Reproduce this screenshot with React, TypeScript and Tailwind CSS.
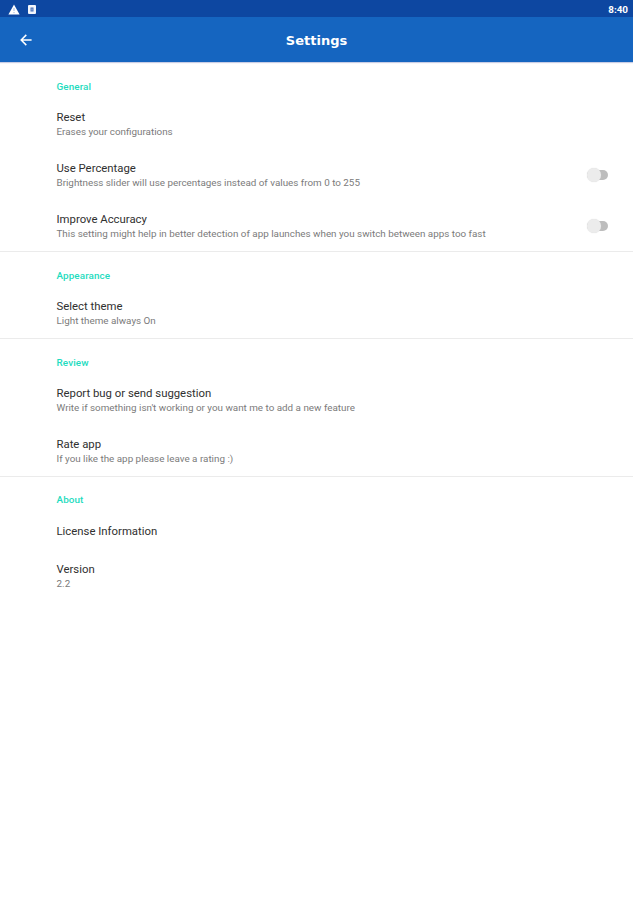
import { useState } from 'react';

type Item = {
  title: string;
  summary?: string;
  toggle?: boolean;
};

type Section = {
  label: string;
  labelClass: string;
  items: Item[];
};

const sections: Section[] = [
  {
    label: 'General',
    labelClass: 'h-[36px] pt-[14px]',
    items: [
      { title: 'Reset', summary: 'Erases your configurations' },
      {
        title: 'Use Percentage',
        summary: 'Brightness slider will use percentages instead of values from 0 to 255',
        toggle: true
      },
      {
        title: 'Improve Accuracy',
        summary: 'This setting might help in better detection of app launches when you switch between apps too fast',
        toggle: true
      }
    ]
  },
  {
    label: 'Appearance',
    labelClass: 'h-[35px] pt-[13px]',
    items: [{ title: 'Select theme', summary: 'Light theme always On' }]
  },
  {
    label: 'Review',
    labelClass: 'h-[35px] pt-[13px]',
    items: [
      {
        title: 'Report bug or send suggestion',
        summary: "Write if something isn't working or you want me to add a new feature"
      },
      { title: 'Rate app', summary: 'If you like the app please leave a rating :)' }
    ]
  },
  {
    label: 'About',
    labelClass: 'h-[36px] pt-[10px]',
    items: [{ title: 'License Information' }, { title: 'Version', summary: '2.2' }]
  }
];

function StatusBar() {
  return (
    <div className="flex h-[17px] items-center bg-[#0d47a1] pl-2 pr-[5px] text-white">
      <svg className="mt-px h-[11px] w-3" viewBox="0 0 12 11">
        <path d="M6 0.6 11.6 10.4H0.4Z" fill="#ffffff" />
        <path d="M6 4v3M6 8v1.2" stroke="#9db4dd" strokeWidth="1" />
      </svg>
      <svg className="ml-2 mt-px h-[9px] w-2" viewBox="0 0 8 9">
        <rect width="8" height="9" rx="1" fill="#f2f5fb" />
        <rect x="2.5" y="2.5" width="3" height="4" fill="#4a70b8" />
        <rect x="3.5" y="3.5" width="1" height="2" fill="#a9bfe2" />
      </svg>
      <span className="ml-auto mt-0.5 text-[9.9px] font-bold leading-none">8:40</span>
    </div>
  );
}

function AppBar() {
  return (
    <header className="grid h-[45px] grid-cols-[1fr_auto_1fr] items-center bg-[#1565c0] text-white shadow-[0_1px_1px_#c9cde4]">
      <button aria-label="Back" className="ml-5 w-3">
        <svg className="h-3 w-3" viewBox="0 0 12 12" fill="none" stroke="currentColor" strokeWidth="1.5">
          <path d="M11.6 6H1.4M6.3 0.9 1.2 6l5.1 5.1" />
        </svg>
      </button>
      <h1 className="pt-px font-['DejaVu_Sans',sans-serif] text-[13px] font-bold leading-none">
        Settings
      </h1>
    </header>
  );
}

function Toggle() {
  const [on, setOn] = useState(false);

  return (
    <button
      role="switch"
      aria-checked={on}
      onClick={() => setOn(!on)}
      className="mr-[25px] flex h-[14px] w-[21px] items-center"
    >
      <span className={`flex h-[10px] w-[21px] items-center rounded-full ${on ? 'justify-end bg-[#80e8d3]' : 'bg-[#bdbdbd]'}`}>
        <span className="h-[14px] w-[14px] shrink-0 rounded-full bg-[#ececec] shadow-[0_0_1px_#d5d5d5]" />
      </span>
    </button>
  );
}

function SettingRow({ item }: { item: Item }) {
  return (
    <div className={`flex items-center justify-between pl-[56.5px] ${item.summary ? 'h-[51px]' : 'h-[37px]'}`}>
      <div>
        <p className="text-[11.35px] leading-[15px] text-[#303030]">{item.title}</p>
        {item.summary && <p className="text-[9.85px] leading-[13px] text-[#7b7b7b]">{item.summary}</p>}
      </div>
      {item.toggle && <Toggle />}
    </div>
  );
}

export default function App() {
  return (
    <div className="min-h-[900px] bg-white font-[Roboto,sans-serif]">
      <StatusBar />
      <AppBar />
      <main>
        {sections.map((section) => (
          <section key={section.label} className="border-b border-[#ebebeb] last:border-b-0">
            <h2 className={`flex items-center pl-[56.5px] text-[9.9px] font-medium tracking-[0.1px] text-[#1fdcc0] ${section.labelClass}`}>
              {section.label}
            </h2>
            {section.items.map((item) => (
              <SettingRow key={item.title} item={item} />
            ))}
          </section>
        ))}
      </main>
    </div>
  );
}
